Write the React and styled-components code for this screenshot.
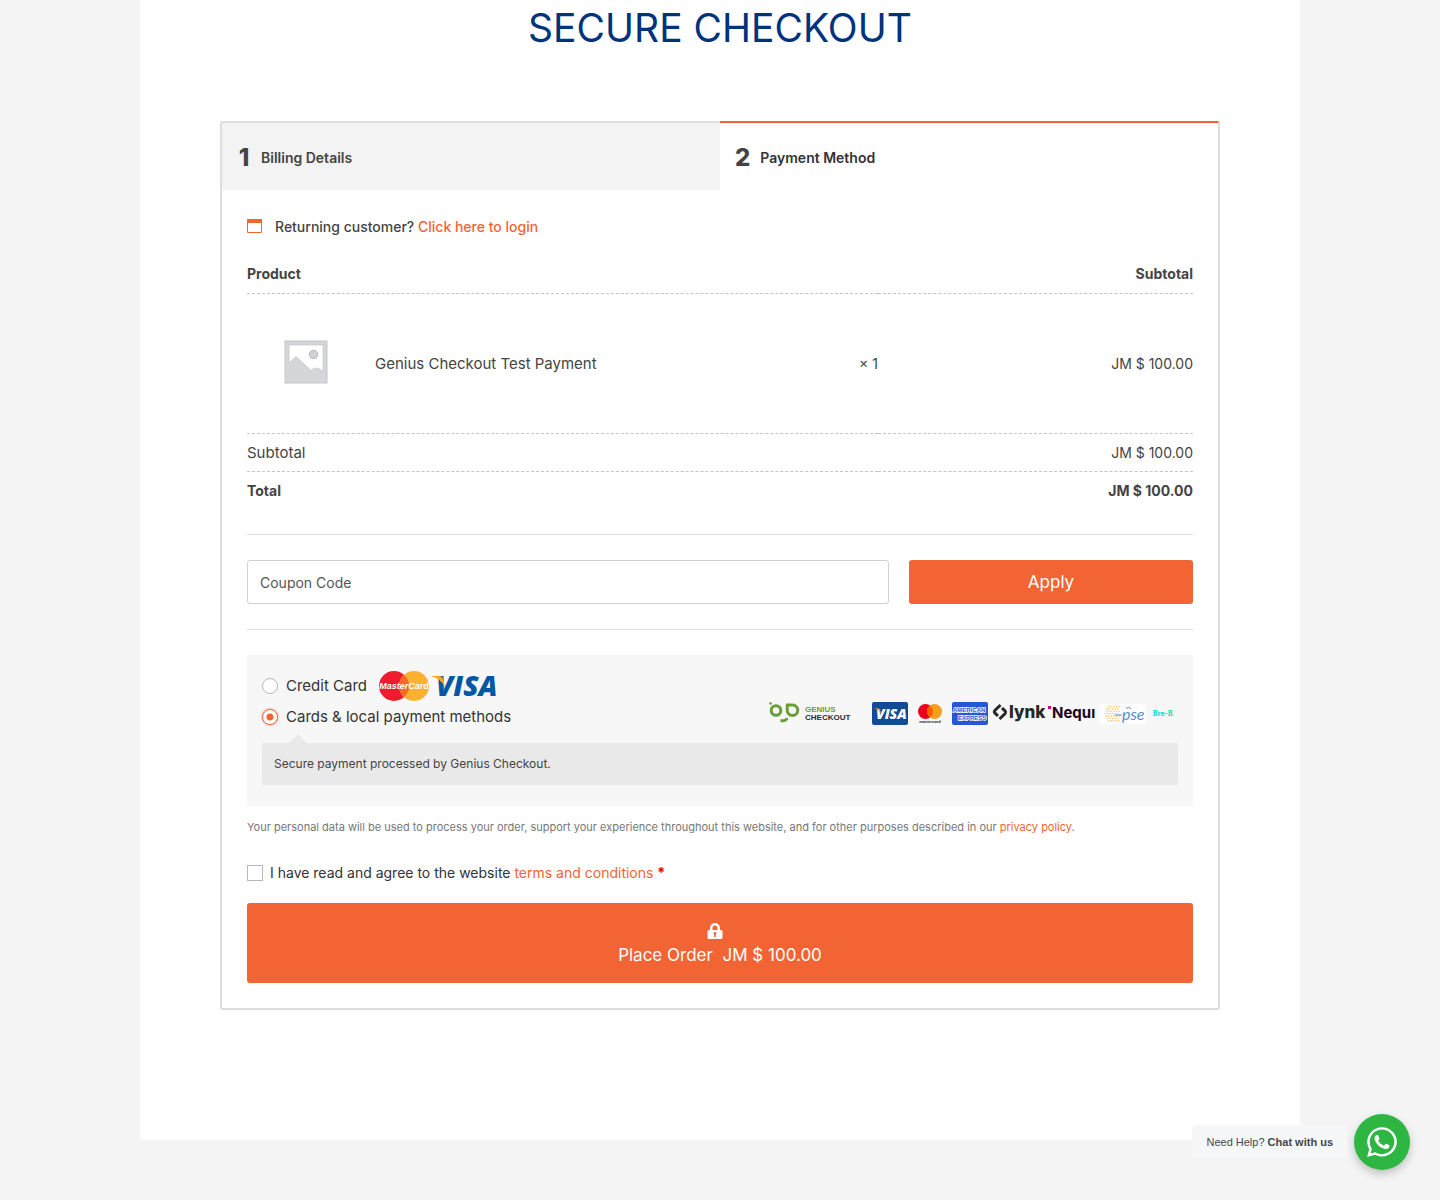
import React, { useState } from 'react';
import styled, { createGlobalStyle, css } from 'styled-components';
import { FaWhatsapp } from 'react-icons/fa';

const colors = {
  navy: '#00337c',
  orange: '#f26434',
  text: '#444444',
  dark: '#333333',
  muted: '#777777',
  border: '#dddddd',
  page: '#f4f4f4',
};

const GlobalStyle = createGlobalStyle`
  *, *::before, *::after {
    box-sizing: border-box;
  }
  body {
    margin: 0;
    background: ${colors.page};
    color: ${colors.text};
    font-family: Inter, "Liberation Sans", sans-serif;
    font-size: 14px;
    line-height: 20px;
  }
  button, input {
    font: inherit;
  }
  svg {
    overflow: visible;
  }
`;

const Page = styled.div`
  min-height: 100vh;
  padding-bottom: 60px;
`;

const Shell = styled.main`
  max-width: 1160px;
  margin: 0 auto;
  padding: 0 80px 130px;
  background: #fff;
`;

const Title = styled.h1`
  margin: 0;
  padding: 3px 0 68px;
  color: ${colors.navy};
  font-size: 39px;
  font-weight: 400;
  line-height: 50px;
  text-align: center;
`;

const Panel = styled.section`
  border: 2px solid ${colors.border};
  border-radius: 3px;
`;

const Tabs = styled.nav`
  display: grid;
  grid-template-columns: 1fr 1fr;
  margin: -2px -2px 0;
`;

const Tab = styled.button`
  display: flex;
  align-items: center;
  gap: 10px;
  height: 69px;
  padding: 2px 15px 0;
  border: 0 solid ${colors.border};
  border-width: 2px 0 0 2px;
  border-top-left-radius: 3px;
  background: #f3f3f3;
  color: ${colors.text};
  font-size: 14px;
  font-weight: 600;
  cursor: pointer;

  ${props =>
    props.$active &&
    css`
      border-width: 2px 2px 0 0;
      border-color: ${colors.orange} ${colors.border};
      border-radius: 0 3px 0 0;
      background: #fff;
      color: ${colors.dark};
    `}
`;

const TabNumber = styled.span`
  min-width: 14px;
  color: ${colors.text};
  font-size: 24px;
  font-weight: 800;
`;

const Content = styled.form`
  padding: 25px;
`;

const Link = styled.a`
  color: ${colors.orange};
  text-decoration: none;
`;

const LoginNotice = styled.div`
  display: flex;
  align-items: center;
  gap: 13px;
  padding: 2px 0;
  font-weight: 500;
`;

const OrderTable = styled.table`
  width: 100%;
  margin-top: 16px;
  border-collapse: collapse;
  table-layout: fixed;

  th,
  td {
    padding: 9px 0;
    border-bottom: 1px dashed #c4c4c4;
    font-weight: 400;
    line-height: 19px;
    text-align: left;
  }
  th:first-child {
    width: 66.7%;
  }
  th + th,
  td:last-child {
    text-align: right;
  }
  thead th {
    padding-bottom: 10px;
    font-weight: 700;
  }
  tfoot th {
    font-size: 15px;
  }
  tr:last-child > .total {
    border-bottom: 0;
    font-size: 14px;
    font-weight: 700;
  }
`;

const Product = styled.div`
  display: grid;
  grid-template-columns: 118px 1fr auto;
  align-items: center;
  gap: 10px;
  height: 121px;
`;

const ProductName = styled.span`
  font-size: 15px;
`;

const Thumb = styled.svg`
  display: block;
  width: 42px;
  height: 42px;
  margin: 0 auto 4px;
`;

const Coupon = styled.div`
  display: grid;
  grid-template-columns: 642fr 284fr;
  gap: 20px;
  margin: 25px 0;
  padding: 25px 0;
  border: 1px solid ${colors.border};
  border-width: 1px 0;
`;

const CouponInput = styled.input`
  min-width: 0;
  height: 44px;
  padding: 0 12px;
  border: 1px solid #d0d0d0;
  border-radius: 3px;
  color: ${colors.text};
  &::placeholder {
    color: #555;
    opacity: 1;
  }
`;

const Button = styled.button`
  border: 0;
  border-radius: 3px;
  background: ${colors.orange};
  color: #fff;
  font-size: 17px;
  line-height: 20px;
  cursor: pointer;
`;

const Methods = styled.div`
  padding: 15px 15px 21px;
  background: #f7f7f7;
`;

const Method = styled.div`
  display: flex;
  align-items: center;
  gap: 8px;
  height: 31px;
  color: ${colors.dark};
  font-size: 15px;
`;

const Radio = styled.input`
  appearance: none;
  flex: none;
  width: 16px;
  height: 16px;
  margin: 0;
  border: 1px solid #b4b9be;
  border-radius: 50%;
  background: #fff;
  &:checked {
    border-color: ${colors.orange};
    background: radial-gradient(circle, ${colors.orange} 3px, #fff 4px);
    box-shadow: 0 0 2px ${colors.orange};
  }
`;

const CardLogos = styled.svg`
  width: 120px;
  height: 31px;
  margin-left: 4px;
`;

const Brands = styled.div`
  display: flex;
  align-self: flex-start;
  gap: 4px;
  margin-left: auto;
  padding-right: 2px;

  svg {
    display: block;
    height: 24px;
  }
  svg:first-child {
    margin-right: 16px;
  }
`;

const MethodInfo = styled.div`
  position: relative;
  margin-top: 11px;
  padding: 11px 12px;
  border-radius: 2px;
  background: #e9e9e9;
  font-size: 12px;
  &::before {
    content: '';
    position: absolute;
    left: 27px;
    top: -9px;
    border: 9px solid transparent;
    border-top: 0;
    border-bottom-color: #e9e9e9;
  }
`;

const Privacy = styled.p`
  margin: 11px 0 26px;
  color: ${colors.muted};
  font-size: 11px;
`;

const Terms = styled.label`
  display: flex;
  align-items: center;
  gap: 7px;
  margin: 0 0 20px;
  color: ${colors.dark};
  font-size: 14px;
`;

const Checkbox = styled.input`
  appearance: none;
  width: 16px;
  height: 16px;
  margin: 0;
  border: 1px solid #b4b9be;
  background: #fff;
  &:checked {
    background: ${colors.orange};
  }
`;

const Required = styled.b`
  color: #e00000;
`;

const PlaceOrder = styled(Button)`
  display: flex;
  flex-direction: column;
  align-items: center;
  gap: 6px;
  width: 100%;
  height: 80px;
  padding: 20px 0 0;
`;

const OrderText = styled.span`
  white-space: pre;
`;

const LockIcon = styled.svg`
  width: 16px;
  height: 16px;
  margin-right: 10px;
`;

const Chat = styled.div`
  position: fixed;
  right: 30px;
  bottom: 30px;
  display: flex;
  align-items: center;
  gap: 7px;
`;

const ChatLabel = styled.div`
  padding: 7px 14px;
  border-radius: 4px;
  background: #f5f7f9;
  color: #43474e;
  font-family: "Liberation Sans", Arial, sans-serif;
  font-size: 11px;
`;

const ChatButton = styled.button`
  display: flex;
  align-items: center;
  justify-content: center;
  width: 56px;
  height: 56px;
  padding: 0;
  border: 0;
  border-radius: 50%;
  background: #2db742;
  box-shadow: 0 4px 8px rgba(0, 0, 0, 0.22);
  color: #fff;
  font-size: 34px;
  cursor: pointer;
`;

const logoFont = '"Liberation Sans", Arial, sans-serif';

const PlaceholderImage = () => (
  <Thumb viewBox="0 0 42 42" role="img" aria-label="Placeholder">
    <rect width="42" height="42" fill="#d5d6da" stroke="#c4c5c9" />
    <path
      d="M4 4h34v27q-3-4-7-4q-3 0-5 2.500L11 15.500L4 22z"
      fill="#fff"
      stroke="#bfc0c4"
      strokeWidth=".6"
    />
    <circle cx="28.500" cy="13.500" r="4.200" fill="#d0d1d5" stroke="#a9abb0" strokeWidth=".8" />
  </Thumb>
);

const MastercardVisa = () => (
  <CardLogos viewBox="0 0 120 31" role="img" aria-label="MasterCard, Visa">
    <circle cx="15" cy="16" r="15" fill="#ed1c2e" />
    <circle cx="35" cy="16" r="15" fill="#fcb131" />
    <path d="M25 4.800a15 15 0 0 1 0 22.400a15 15 0 0 1 0-22.400z" fill="#f36b24" />
    <text x="25" y="19" fill="#fff" fontFamily={logoFont} fontSize="9" fontWeight="700" fontStyle="italic" textAnchor="middle">
      MasterCard
    </text>
    <text x="57" y="26" fill="#0157a2" fontFamily='"Open Sans", sans-serif' fontSize="28" fontWeight="800" fontStyle="italic">
      VISA
    </text>
    <path d="M52 6h8q3 0 4 3l2 8Q62 9 52 6z" fill="#faa61a" />
  </CardLogos>
);

const GeniusLogo = () => (
  <svg width="83" viewBox="0 0 83 24" role="img" aria-label="Genius Checkout">
    <g fill="none" stroke="#689f38" strokeWidth="3">
      <circle cx="7" cy="9.500" r="4.800" />
      <path d="M17 4h6.500a5.300 5.300 0 1 1-5.300 5.300V4" />
      <path d="M11.500 19.500q6 1 6.500-2.500" />
    </g>
    <circle cx="1.500" cy="2.500" r="1.300" fill="#689f38" />
    <text x="36" y="11" fill="#689f38" fontFamily={logoFont} fontSize="8" fontWeight="700">GENIUS</text>
    <text x="36" y="19" fill="#1d2a44" fontFamily={logoFont} fontSize="8" fontWeight="700">CHECKOUT</text>
  </svg>
);

const VisaBadge = () => (
  <svg width="36" viewBox="0 0 36 24" role="img" aria-label="Visa">
    <rect width="36" height="23" y="1" rx="2" fill="#134a94" />
    <text x="4" y="17.500" fill="#fff" fontFamily='"Open Sans", sans-serif' fontSize="14" fontWeight="800" fontStyle="italic">VISA</text>
    <path d="M2 7.500h4q1.500 0 2 2l.8 3Q7 8.500 2 7.500z" fill="#f5a623" />
  </svg>
);

const MastercardBadge = () => (
  <svg width="36" viewBox="0 0 36 24" role="img" aria-label="Mastercard">
    <circle cx="13.500" cy="10.500" r="7.500" fill="#eb001b" />
    <circle cx="22.500" cy="10.500" r="7.500" fill="#f79e1b" />
    <path d="M18 4.500a7.500 7.500 0 0 1 0 12a7.500 7.500 0 0 1 0-12z" fill="#ff5f00" />
    <text x="18" y="22" fill="#222" fontFamily={logoFont} fontSize="4" fontWeight="700" textAnchor="middle">mastercard</text>
  </svg>
);

const AmexBadge = () => (
  <svg width="36" viewBox="0 0 36 24" role="img" aria-label="American Express">
    <rect width="36" height="23" y="1" rx="2" fill="#2557d6" />
    <g fill="#2557d6" stroke="#fff" strokeWidth="1.400" paintOrder="stroke" fontFamily={logoFont} fontSize="6" fontWeight="700">
      <text x="1" y="11">AMERICAN</text>
      <text x="6" y="18.500">EXPRESS</text>
    </g>
  </svg>
);

const LynkLogo = () => (
  <svg width="52" viewBox="0 0 52 24" role="img" aria-label="Lynk">
    <g fill="none" stroke="#272727" strokeWidth="3">
      <path d="M8.500 4L2.800 9.500q-1 1.200 0 2.400L6 15" />
      <path d="M7.500 18l5.700-5.500q1-1.200 0-2.400L10 7" />
    </g>
    <text x="17" y="16.500" fill="#272727" fontFamily="Inter, sans-serif" fontSize="17" fontWeight="800">lynk</text>
  </svg>
);

const NequiLogo = () => (
  <svg width="48" viewBox="0 0 48 24" role="img" aria-label="Nequi">
    <rect x="0" y="5" width="3" height="3" fill="#da0081" />
    <text x="4" y="17" fill="#200020" fontFamily="Inter, sans-serif" fontSize="15" fontWeight="700">Nequı</text>
  </svg>
);

const pseDots = [];
for (let row = 0; row < 7; row += 1) {
  const offset = Math.abs(3 - row);
  for (let col = 0; col < 6 - offset / 2; col += 1) {
    pseDots.push([5 + offset * 1.2 + col * 2.6, 5.5 + row * 2.4]);
  }
}

const PseLogo = () => (
  <svg width="46" viewBox="0 0 46 24" role="img" aria-label="PSE">
    <rect width="46" height="20" y="3" fill="#fff" />
    {pseDots.map(([x, y]) => (
      <circle key={`${x}-${y}`} cx={x} cy={y} r=".8" fill="#f8c471" />
    ))}
    <path d="M15 14h7M26 7.500q2.500-2.500 5 0" fill="none" stroke="#4f8fc9" />
    <text x="22" y="18.500" fill="#4f8fc9" fontFamily="Lato, sans-serif" fontSize="16" fontStyle="italic">pse</text>
  </svg>
);

const BreBLogo = () => (
  <svg width="26" viewBox="0 0 26 24" role="img" aria-label="Bre-B">
    <defs>
      <linearGradient id="breb">
        <stop offset="0" stopColor="#10d9ef" />
        <stop offset="1" stopColor="#25eb96" />
      </linearGradient>
    </defs>
    <text x="3" y="14.500" fill="url(#breb)" fontFamily="Inter, sans-serif" fontSize="7" fontWeight="800">Bre-B</text>
  </svg>
);

export default function App() {
  const [method, setMethod] = useState('local');
  const [step, setStep] = useState(2);

  return (
    <Page>
      <GlobalStyle />
      <Shell>
        <Title>SECURE CHECKOUT</Title>
        <Panel>
          <Tabs>
            <Tab type="button" $active={step === 1} onClick={() => setStep(1)}>
              <TabNumber>1</TabNumber> Billing Details
            </Tab>
            <Tab type="button" $active={step === 2} onClick={() => setStep(2)}>
              <TabNumber>2</TabNumber> Payment Method
            </Tab>
          </Tabs>
          <Content onSubmit={e => e.preventDefault()}>
            <LoginNotice>
              <svg width="15" height="16" viewBox="0 0 15 16" aria-hidden="true">
                <path d="M.5 .5h14v13H.5z" fill="none" stroke={colors.orange} />
                <path d="M0 0h15v4H0z" fill={colors.orange} />
              </svg>
              <span>
                Returning customer? <Link href="#login">Click here to login</Link>
              </span>
            </LoginNotice>
            <OrderTable>
              <thead>
                <tr>
                  <th scope="col">Product</th>
                  <th scope="col">Subtotal</th>
                </tr>
              </thead>
              <tbody>
                <tr>
                  <td>
                    <Product>
                      <PlaceholderImage />
                      <ProductName>Genius Checkout Test Payment</ProductName>
                      <span>× 1</span>
                    </Product>
                  </td>
                  <td>JM $ 100.00</td>
                </tr>
              </tbody>
              <tfoot>
                <tr>
                  <th scope="row">Subtotal</th>
                  <td>JM $ 100.00</td>
                </tr>
                <tr>
                  <th scope="row" className="total">Total</th>
                  <td className="total">JM $ 100.00</td>
                </tr>
              </tfoot>
            </OrderTable>
            <Coupon>
              <CouponInput aria-label="Coupon Code" placeholder="Coupon Code" />
              <Button type="button">Apply</Button>
            </Coupon>
            <Methods>
              <Method>
                <Radio
                  type="radio"
                  name="method"
                  id="method-card"
                  checked={method === 'card'}
                  onChange={() => setMethod('card')}
                />
                <label htmlFor="method-card">Credit Card</label>
                <MastercardVisa />
              </Method>
              <Method>
                <Radio
                  type="radio"
                  name="method"
                  id="method-local"
                  checked={method === 'local'}
                  onChange={() => setMethod('local')}
                />
                <label htmlFor="method-local">Cards &amp; local payment methods</label>
                <Brands>
                  <GeniusLogo />
                  <VisaBadge />
                  <MastercardBadge />
                  <AmexBadge />
                  <LynkLogo />
                  <NequiLogo />
                  <PseLogo />
                  <BreBLogo />
                </Brands>
              </Method>
              <MethodInfo>Secure payment processed by Genius Checkout.</MethodInfo>
            </Methods>
            <Privacy>
              Your personal data will be used to process your order, support your experience
              throughout this website, and for other purposes described in our{' '}
              <Link href="#privacy">privacy policy</Link>.
            </Privacy>
            <Terms>
              <Checkbox type="checkbox" />
              <span>
                I have read and agree to the website <Link href="#terms">terms and conditions</Link>{' '}
                <Required>*</Required>
              </span>
            </Terms>
            <PlaceOrder type="submit">
              <LockIcon viewBox="0 0 16 16" aria-hidden="true">
                <path
                  d="M3 7V5a5 5 0 0 1 10 0v2h1q1.500 0 1.500 1.500v6q0 1.500-1.500 1.500H2q-1.500 0-1.500-1.500v-6Q.5 7 2 7zm2.500 0h5V5a2.500 2.500 0 0 0-5 0zM8 9a1.500 1.500 0 0 0-.8 2.700V14h1.600v-2.300A1.500 1.500 0 0 0 8 9z"
                  fill="#fff"
                  fillRule="evenodd"
                />
              </LockIcon>
              <OrderText>{'Place Order  JM $ 100.00'}</OrderText>
            </PlaceOrder>
          </Content>
        </Panel>
      </Shell>
      <Chat>
        <ChatLabel>
          Need Help? <b>Chat with us</b>
        </ChatLabel>
        <ChatButton type="button" aria-label="Chat with us">
          <FaWhatsapp />
        </ChatButton>
      </Chat>
    </Page>
  );
}
